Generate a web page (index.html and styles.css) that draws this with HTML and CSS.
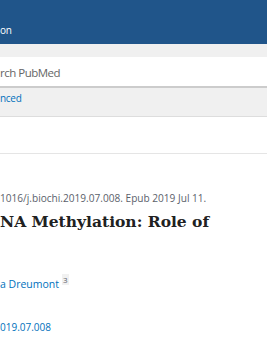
FILE: index.html
```html
<!DOCTYPE html>
<html lang="en">
<head>
    <meta charset="UTF-8">
    <meta name="viewport" content="width=device-width, initial-scale=1.0">
    <title>PubMed</title>
    <link rel="stylesheet" href="styles.css">
</head>
<body>

<div class="ncbi-header">
    <span class="ncbi-name">on</span>
</div>

<div class="search-bar">
    <div class="search-box">
        <span class="search-input">rch PubMed</span>
    </div>
    <a class="advanced-link" href="#">nced</a>
</div>

<div class="page-actions"></div>

<div class="article">
    <div class="cit">1016/j.biochi.2019.07.008. Epub 2019 Jul 11.</div>
    <h1 class="heading-title">NA Methylation: Role of</h1>
    <div class="authors">
        <a href="#" class="author">a Dreumont</a><sup class="affil">3</sup>
    </div>
    <div class="doi">
        <a href="#">019.07.008</a>
    </div>
</div>

</body>
</html>
```

FILE: styles.css
```css
body { margin: 0; font-family: "Open Sans", sans-serif; color: #212121; background-color: #fff; overflow: hidden; width: 267px; }
a { color: #0071bc; text-decoration: none; }

.ncbi-header { height: 44px; background-color: #20558a; white-space: nowrap; }
.ncbi-name { display: block; padding-top: 23px; font-size: 10px; color: #fff; letter-spacing: -0.3px; }

.search-bar { background-color: #f0f0f0; padding-top: 13px; height: 59px; border-bottom: 1px solid #ddd; white-space: nowrap; }
.search-box { height: 28px; background-color: #fff; border-bottom: 2px solid #ccc; display: flex; align-items: center; padding-top: 1px; }
.search-input { font-size: 11.5px; letter-spacing: -0.5px; color: #666; }
.advanced-link { display: block; padding-top: 3px; font-size: 10px; letter-spacing: -0.3px; }

.page-actions { height: 36px; border-bottom: 1px solid #e5e5e5; }

.article { white-space: nowrap; }
.cit { padding-top: 37px; font-size: 10.1px; color: #5b616b; }
.heading-title { margin: 7px 0 0; font-family: "DejaVu Serif", serif; font-size: 15.5px; font-weight: bold; color: #212121; }
.authors { padding-top: 43px; font-size: 10.5px; }
.affil { font-size: 8px; color: #5b616b; background-color: #f1f1f1; padding: 0 1px; margin-left: 3px; }
.doi { padding-top: 29px; font-size: 10px; }
```
